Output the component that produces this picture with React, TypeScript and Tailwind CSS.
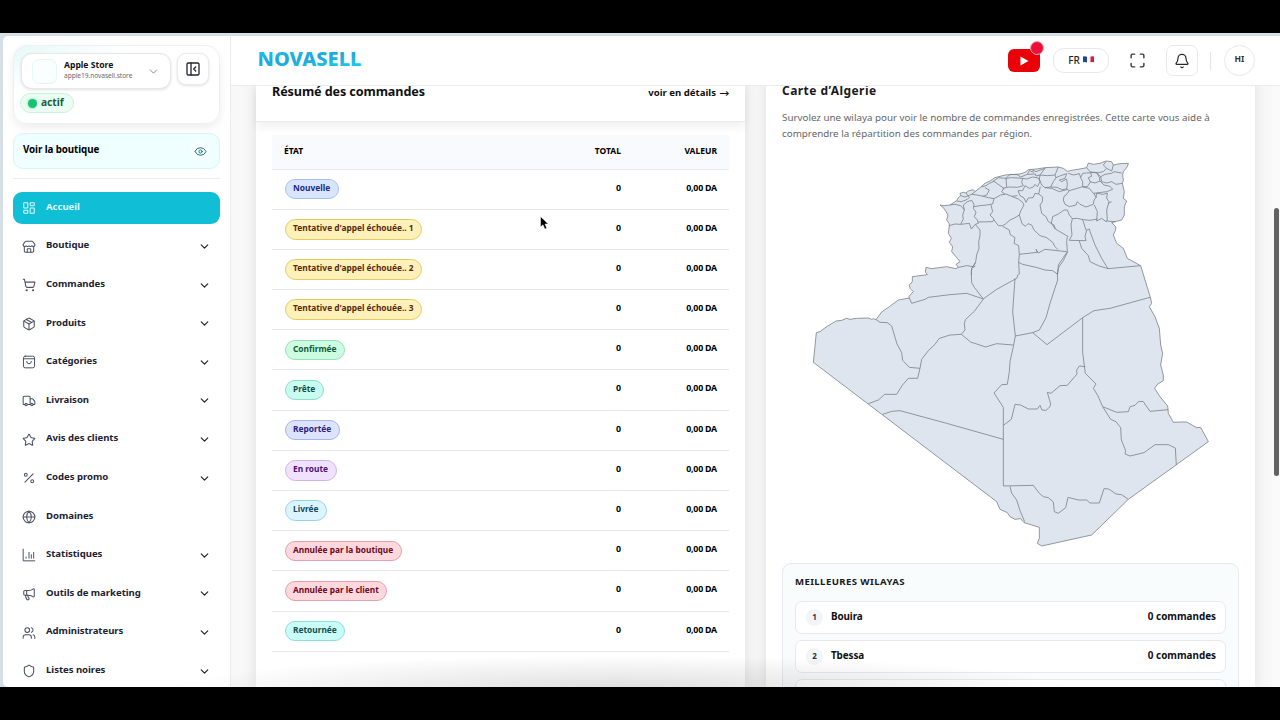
import {
  Bell,
  ChevronDown,
  Eye,
  Globe,
  LayoutDashboard,
  Maximize,
  Megaphone,
  Package,
  PanelLeftClose,
  Percent,
  Shield,
  ShoppingCart,
  Star,
  Store,
  Truck,
  Users,
} from 'lucide-react';

const navItems = [
  { label: 'Accueil', icon: LayoutDashboard, active: true },
  { label: 'Boutique', icon: Store, menu: true },
  { label: 'Commandes', icon: ShoppingCart, menu: true },
  { label: 'Produits', icon: Package, menu: true },
  { label: 'Catégories', icon: CategoryIcon, menu: true },
  { label: 'Livraison', icon: Truck, menu: true },
  { label: 'Avis des clients', icon: Star, menu: true },
  { label: 'Codes promo', icon: Percent, menu: true },
  { label: 'Domaines', icon: Globe },
  { label: 'Statistiques', icon: StatsIcon, menu: true },
  { label: 'Outils de marketing', icon: Megaphone, menu: true },
  { label: 'Administrateurs', icon: Users, menu: true },
  { label: 'Listes noires', icon: Shield, menu: true },
];

const orders = [
  { label: 'Nouvelle', style: 'bg-[#d8e5fd] border-[#a9c1ee] text-[#1b2a86]' },
  { label: "Tentative d'appel échouée.. 1", style: 'bg-[#fdf0b8] border-[#e2cc62] text-[#5c2a0c]' },
  { label: "Tentative d'appel échouée.. 2", style: 'bg-[#fdf0b8] border-[#e2cc62] text-[#5c2a0c]' },
  { label: "Tentative d'appel échouée.. 3", style: 'bg-[#fdf0b8] border-[#e2cc62] text-[#5c2a0c]' },
  { label: 'Confirmée', style: 'bg-[#cdfde0] border-[#98dfb8] text-[#13593d]' },
  { label: 'Prête', style: 'bg-[#c8fcf1] border-[#8fdccf] text-[#144f4c]' },
  { label: 'Reportée', style: 'bg-[#dce3fe] border-[#a9b4ea] text-[#2b2381]' },
  { label: 'En route', style: 'bg-[#f0e2ff] border-[#cfb3e8] text-[#4b1278]' },
  { label: 'Livrée', style: 'bg-[#dbf4fe] border-[#96d4e4] text-[#154860]' },
  { label: 'Annulée par la boutique', style: 'bg-[#fed8dd] border-[#e3a1ab] text-[#6d0a24]' },
  { label: 'Annulée par le client', style: 'bg-[#fed8dd] border-[#e3a1ab] text-[#6d0a24]' },
  { label: 'Retournée', style: 'bg-[#c9fdf8] border-[#8fdedb] text-[#15504f]' },
];

const wilayas = ['Bouira', 'Tbessa'];

function CategoryIcon({ className }: { className?: string; strokeWidth?: number }) {
  return (
    <svg className={className} viewBox="0 0 24 24" fill="none" stroke="currentColor" strokeWidth={1.7} strokeLinecap="round" strokeLinejoin="round">
      <rect x="2.5" y="2" width="19" height="20" rx="3" />
      <path d="M2.5 6.5h19M8 11a4 4 0 0 0 8 0" />
    </svg>
  );
}

function StatsIcon({ className }: { className?: string; strokeWidth?: number }) {
  return (
    <svg className={className} viewBox="0 0 24 24" fill="none" stroke="currentColor" strokeWidth={1.7} strokeLinecap="round">
      <path d="M2 2v20h20M7 17.500v-2M12 17.500v-10M16 17.500v-6M20 17.500v-10" />
    </svg>
  );
}

const Sidebar = () => (
  <aside className="h-full w-[228px] shrink-0 overflow-hidden rounded-l-[5px] border-r border-[#ececee] bg-white pr-[10px] pl-[10px] pt-[9px]">
    <div className="h-[79px] rounded-[14px] border border-[#eef0f1] bg-linear-to-br from-[#e6f8f8] via-white via-30% to-white px-[7px] pt-[7px] shadow-[0_4px_8px_rgba(0,0,0,0.07)]">
      <div className="flex gap-[6px]">
        <div className="flex h-[36px] w-[150px] items-center rounded-[11px] border border-[#e6e8ea] bg-white shadow-[0_1px_3px_rgba(0,0,0,0.12)]">
          <div className="ml-[10px] h-[25px] w-[25px] rounded-[7px] border border-[#e6f7f8] bg-[#f9fefe]" />
          <div className="-mt-[1px] ml-[7px] w-[76px] whitespace-nowrap">
            <div className="text-[8.6px] leading-[11px] font-bold text-[#111]">Apple Store</div>
            <div className="text-[6.6px] leading-[10px] tracking-[-0.05px] text-[#667]">apple19.novasell.store</div>
          </div>
          <ChevronDown className="ml-[7px] h-[13px] w-[13px] text-[#888]" strokeWidth={1.8} />
        </div>
        <div className="flex h-[32px] w-[32px] items-center justify-center rounded-[9px] border border-[#e9ebed] bg-white pr-px shadow-[0_1px_3px_rgba(0,0,0,0.12)]">
          <PanelLeftClose className="h-[16px] w-[16px] text-[#23262d]" strokeWidth={2} />
        </div>
      </div>
      <div className="mt-[4px] -ml-px flex h-[20px] w-[54px] items-center rounded-full border border-[#c9f3db] bg-[#ebfdf2] pl-[7px]">
        <span className="h-[9px] w-[9px] shrink-0 rounded-full bg-[#19c274] shadow-[0_0_3px_#5fdca4]" />
        <span className="-mt-[3px] ml-[4px] text-[10.2px] leading-[14px] font-bold text-[#14603f]">actif</span>
      </div>
    </div>

    <div className="mt-[9px] flex h-[36px] items-center justify-between rounded-[10px] border border-[#d5f5f7] bg-[#effefe] pr-[9px] pl-[9px]">
      <span className="-mt-[2px] text-[9.8px] font-bold tracking-[-0.1px] text-black">Voir la boutique</span>
      <span className="flex h-[20px] w-[20px] items-center justify-center rounded-full bg-[#f7feff]">
        <Eye className="h-[13px] w-[13px] text-[#1d6f7c]" strokeWidth={1.8} />
      </span>
    </div>
    <div className="mt-[9px] h-px bg-[#ececee]" />

    <nav className="mt-[13px] flex flex-col gap-[6.6px]">
      {navItems.map(({ label, icon: Icon, active, menu }) => (
        <div
          key={label}
          className={`flex h-[32px] shrink-0 items-center rounded-[9px] pr-[9px] pl-[9px] ${
            active ? 'bg-[#10bfd6] text-[#d9fbff]' : 'text-[#4c5262]'
          }`}
        >
          <Icon className="h-[14px] w-[14px]" strokeWidth={1.8} />
          <span
            className={`-mt-[2px] ml-[10px] flex-1 text-[9.6px] font-bold tracking-[-0.05px] whitespace-nowrap ${
              active ? 'text-[#d9fbff]' : 'text-[#1d2232]'
            }`}
          >
            {label}
          </span>
          {menu && <ChevronDown className="h-[13px] w-[13px] text-[#222]" strokeWidth={2.2} />}
        </div>
      ))}
    </nav>
  </aside>
);

const Header = () => (
  <header className="relative z-10 flex h-[50px] shrink-0 items-center border-b border-[#ececee] bg-white pr-[25px] pl-[27px]">
    <svg className="-mt-[4px] h-[30px] w-[106px]" viewBox="0 0 106 30">
      <defs>
        <linearGradient id="brand" x1="0" y1="0" x2="0.4" y2="1" spreadMethod="reflect">
          <stop offset="0" stopColor="#16d3f3" />
          <stop offset="0.6" stopColor="#1fa6dc" />
          <stop offset="1" stopColor="#18cbee" />
        </linearGradient>
      </defs>
      <text x="-0.500" y="21.500" fontSize="20" fontWeight="800" textLength="104" lengthAdjust="spacingAndGlyphs" fill="url(#brand)">
        NOVASELL
      </text>
    </svg>
    <div className="ml-auto flex items-center">
      <div className="relative flex h-[23px] w-[32px] items-center justify-center rounded-[6px] bg-[#ea0008]">
        <svg className="h-[10px] w-[9px]" viewBox="0 0 9 10">
          <path d="M0.500 0.500 L8.500 5 L0.500 9.500Z" fill="#fff" />
        </svg>
        <span className="absolute -top-[8px] -right-[4px] h-[14px] w-[14px] rounded-full border border-[#f3a6b5] bg-[#ea1038]" />
      </div>
      <div className="ml-[13px] flex h-[25px] w-[56px] items-center justify-center gap-[3px] rounded-[11px] border border-[#e9e9eb]">
        <span className="-mt-[2px] text-[10px] leading-[12px] font-medium text-[#222]">FR</span>
        <svg className="-mt-[2px] h-[7px] w-[11px]" viewBox="0 0 11 7">
          <path d="M0 0.500 Q2 0 4 0.800 V6.500 Q2 5.700 0 6.300Z" fill="#1c4a86" />
          <path d="M4 0.800 L7.500 0.500 V6.200 L4 6.500Z" fill="#f1f3f6" />
          <path d="M7.500 0.500 Q9.500 0 11 0.500 V6.300 Q9.500 5.800 7.500 6.200Z" fill="#d81f3a" />
        </svg>
      </div>
      <Maximize className="ml-[20px] h-[17px] w-[17px] text-[#3a3a3e]" strokeWidth={2} />
      <div className="ml-[20px] flex h-[31px] w-[32px] items-center justify-center rounded-[7px] border border-[#e9e9eb]">
        <Bell className="h-[16px] w-[16px] text-[#2a2a2e]" strokeWidth={1.8} />
      </div>
      <div className="ml-[12px] h-[18px] w-px bg-[#e5e5e7]" />
      <div className="ml-[13px] flex h-[31px] w-[31px] items-center justify-center rounded-full border border-[#e9e9eb] pb-[3px] text-[8.5px] font-bold text-[#333]">
        HI
      </div>
    </div>
  </header>
);

const OrdersCard = () => (
  <section className="h-full w-[489px] shrink-0 bg-white pt-[10px] shadow-[0_0_14px_rgba(0,0,0,0.1)]">
    <div className="flex h-[35.500px] justify-between border-b border-[#e9eaec] px-[16px] shadow-[0_5px_9px_rgba(0,0,0,0.06)]">
      <h2 className="text-[12.6px] leading-[11px] font-bold tracking-[-0.1px] whitespace-nowrap text-[#111]">Résumé des commandes</h2>
      <a className="flex h-[13px] items-center gap-[3px] text-[9.6px] leading-[12px] font-bold whitespace-nowrap text-[#111]">
        voir en détails
        <span className="w-[10px] font-['DejaVu_Sans'] text-[12px] leading-[10px] font-normal">→</span>
      </a>
    </div>
    <div className="mx-[16px] mt-[13px]">
      <div className="flex h-[35px] items-center border-b border-[#e9eaec] bg-[#f8fafd] px-[12px] text-[8.5px] font-bold text-black">
        <span className="flex-1">ÉTAT</span>
        <span className="w-[96px] text-right">TOTAL</span>
        <span className="w-[96px] text-right">VALEUR</span>
      </div>
      {orders.map((order) => (
        <div key={order.label} className="flex h-[40.2px] items-center border-b border-[#e6e8eb] px-[12px] text-[8.8px] font-bold text-black">
          <div className="flex flex-1 pl-[0.5px]">
            <span className={`flex h-[20.500px] items-center rounded-full border px-[7.5px] pb-[2px] text-[8.35px] whitespace-nowrap ${order.style}`}>
              {order.label}
            </span>
          </div>
          <span className="w-[96px] pb-[2px] text-right">0</span>
          <span className="w-[96px] pb-[2px] text-right tracking-[-0.2px]">0,00 DA</span>
        </div>
      ))}
    </div>
  </section>
);

// Country shape, then the wilaya borders of the three regions
const AlgeriaMap = () => (
  <svg className="h-[400px] w-[420px]" viewBox="0 0 1260 1200" fill="none" stroke="#7b8088" strokeWidth={2.4} strokeLinejoin="round">
    <path
      fill="#dfe5ee"
      d="M40 622L49 533L60 530L80 515L108 498L125 496L140 490L150 493L170 490L205 489L215 493L220 491L228 494L245 471L268 455L295 435L328 429L327 424L340 410L330 400L328 390L337 380L337 365L382 359L376 351L378 337L395 341L440 335L468 341L475 337L468 328L480 320L472 310L455 290L458 275L448 262L454 250L445 235L448 212L447 205L440 195L444 180L432 160L420 150L432 152L450 150L470 137L475 128L482 122L480 115L490 112L498 114L505 108L520 104L525 110L540 98L555 85L570 78L585 68L615 60L660 57L675 52L685 44L710 42L735 38L775 36L790 40L802 49L820 45L840 42L860 38L865 24L880 28L900 25L918 18L935 20L940 30L960 26L985 25L982 35L970 50L968 60L970 75L967 85L973 110L970 130L980 138L973 155L973 180L965 195L945 200L935 203L947 215L947 225L940 240L950 265L970 280L982 310L1022 332L1051 427L1055 445L1048 455L1065 485L1078 520L1082 570L1088 595L1082 630L1090 660L1090 677L1072 688L1064 700L1080 725L1103 753L1105 775L1120 802L1140 801L1160 801L1190 818L1202 817L1225 860L1128 930L985 1033L875 1140L725 1173L712 1165L718 1150L718 1117L695 1110L672 1103L662 1091L645 1093L630 1085L622 1073L600 1063L590 1040Z"
    />
    {/* North */}
    <g transform="translate(390 0)">
      <path d="M57 212L75 207L92 208L100 192L98 180L103 165L92 152L75 148L60 150M80 138L95 140L112 133L118 127L108 114M92 122L105 126L118 121L125 118L135 110M92 208L118 205L124 222L136 208L150 225L150 242L146 260L147 280L140 300L137 320L130 335L110 332L85 337M103 165L100 150L112 140L125 136L132 148L130 160L138 172L133 185L142 195L145 205L136 208" />
      <path d="M125 118L142 120L160 124L175 128L192 131L188 147L170 150L150 152L132 155M192 131L212 120L228 117L245 124L262 122M155 96L168 92L180 84L192 79L210 92L222 100L215 110L225 118M165 98L178 105L170 120L158 124M188 80L205 68L228 70L230 97L218 101M228 70L245 68L278 70L275 82L280 92L262 97L240 96L230 97M183 150L188 170L180 180L192 192L188 200L145 201M192 195L205 212L218 212L225 208L240 195L255 188L268 180L272 168L282 150L278 142L265 132L245 124" />
      <path d="M278 70L290 72L308 66L325 69L330 80L322 95L315 88L310 96L298 100L285 92L278 107L264 107L270 122L282 129L288 142L295 129L309 128L315 115L326 117L331 95M326 117L338 126L337 140L330 150L335 175L348 185L355 200L372 210L376 222L415 245M228 70L240 58L262 59L272 66L292 58L316 57L318 63L330 60L345 40L318 50L305 44M292 58L298 47L312 52M330 60L352 62L375 60L385 36M330 60L328 72L335 90L345 98L362 96L370 80L378 68L375 60M378 68L392 62L410 56L405 70L388 75L395 80L410 72L412 88L410 102L395 104L382 97L362 96" />
      <path d="M415 55L430 60L448 56L452 68L458 80L458 95L442 100L418 107L410 102M345 98L365 100L388 110L410 104M452 68L458 55L470 54L482 53L500 52L508 67L510 78L495 84L480 80L475 68L485 64L482 53M458 95L472 95L482 80M470 38L480 50L500 54L520 50L530 40L520 30L528 20M530 40L545 48L550 30M500 54L512 65L525 58L545 55L552 50L575 54M512 65L515 80L530 84L545 80L558 88L578 85M510 78L522 90L540 94L548 103L530 110L490 115L478 100L458 96" />
      <path d="M418 107L408 120L402 124L400 135L405 148L418 155L438 150L442 140L450 148L468 156L490 148L492 135L498 128L492 115M498 128L500 115L520 118L532 114L530 130L537 140L530 165L532 195L528 200L515 190L500 198L502 170L493 150M502 192L480 196L460 194L442 190L427 191L418 180L412 165L402 165L385 177L368 185L364 205L376 222M545 140L535 145M528 198L556 200M427 191L423 210L426 240L418 256L468 257L465 245L470 225L478 222L482 235L495 270L515 310L534 341M468 225L458 194M412 245L410 260L412 290L385 330L383 358M448 258L455 280L475 302L480 320L505 332L534 341L632 332" />
      <path d="M218 214L238 225L240 238L255 248L252 265L266 272L268 298L322 292L318 283L325 294L345 283L410 290M268 180L276 206L286 214L294 206L305 210L312 225L330 242L350 248L368 262L375 275L384 284M268 298L266 322L278 328L322 338L345 345L368 347L383 358M266 322L268 358M137 322L125 340L124 360" />
    </g>
    {/* West */}
    <g transform="translate(0 285)">
      <path d="M526 48L515 55L514 70L515 98L523 112L550 147L500 130L450 134L385 142L375 148L335 160L328 144M551 146L590 118L650 85L655 72M551 146L523 184L497 208L493 220L495 240L484 253L512 276L557 291L590 281L640 285M484 253L450 255L418 265L405 283L385 302L365 328L360 355L328 352L308 331L305 308L291 282L275 228L262 218L240 217L228 209M360 355L353 385L325 385L306 407L290 433L254 433L235 450L205 461M248 493L275 484L300 482L440 520L610 568" />
    </g>
    {/* East and south */}
    <g transform="translate(600 285)">
      <path d="M45 85L38 185L46 258L40 290L35 312L30 335L28 365L22 403L5 404L-18 429L10 472L10 708L100 706M46 258L98 248L141 284L248 203L282 182L330 175L450 142M98 248L118 240L138 203L150 160L173 90L172 72L176 52L190 32L203 5M248 203L248 308L256 370L288 402L280 415L294 438L308 470L332 508L348 515L362 533L364 570L377 602L375 612L390 618L432 608L465 584L505 584L526 594L529 645M308 470L350 487L385 485L390 470L405 466L415 455L429 454L450 484L505 479M256 350L238 348L230 360L231 372L202 406L180 407L153 430L142 427L152 462L150 470L138 481L126 480L120 466L112 477L85 477L62 465L45 463L34 508L10 526M100 706L118 730L130 740L145 743L160 756L163 785L175 790L197 773L204 742L235 750L260 750L270 759L298 759L312 716L326 717L348 732L365 734L385 748M30 709L35 730L50 750L60 782L74 815" />
    </g>
  </svg>
);

const MapCard = () => (
  <section className="h-full w-[489px] shrink-0 bg-white px-[16px] pt-[10px] shadow-[0_0_14px_rgba(0,0,0,0.1)]">
    <h2 className="text-[12px] leading-[10px] font-bold tracking-[0.45px] whitespace-nowrap text-[#1a1a1e]">Carte d’Algerie</h2>
    <p className="mt-[14px] h-[45px] text-[9.8px] leading-[16px] whitespace-nowrap text-[#666]">
      Survolez une wilaya pour voir le nombre de commandes enregistrées. Cette carte vous aide à
      <br />
      comprendre la répartition des commandes par région.
    </p>
    <div className="ml-[18px] h-[408px]">
      <AlgeriaMap />
    </div>
    <div className="rounded-t-[9px] border border-[#e6eaee] bg-[#f9fcfd] px-[12px] pt-[9px]">
      <h3 className="text-[9.6px] leading-[18px] font-bold tracking-[0.4px] text-[#1a1a1e]">MEILLEURES WILAYAS</h3>
      <div className="mt-[10px] flex flex-col gap-[6px]">
        {wilayas.map((name, i) => (
          <div key={name} className="flex h-[33px] items-center rounded-[7px] border border-[#e6eaee] bg-white pr-[9px] pl-[10px] text-[9.9px] font-bold text-[#111]">
            <span className="flex h-[17px] w-[17px] items-center justify-center rounded-full bg-[#f3f4f7] pb-px text-[8px] text-[#333]">{i + 1}</span>
            <span className="ml-[8px] pb-[2px] tracking-[-0.1px]">{name}</span>
            <span className="ml-auto pb-[2px] whitespace-nowrap">0 commandes</span>
          </div>
        ))}
        <div className="h-[33px] rounded-[7px] border border-[#e6eaee] bg-white" />
      </div>
    </div>
  </section>
);

export default function App() {
  return (
    <div className="flex h-[720px] w-[1280px] flex-col overflow-hidden bg-black py-[33px] font-['Noto_Sans',sans-serif]">
      <div className="relative flex h-[654px] overflow-hidden bg-[#d5dfe7] pt-[3px] pl-[3px]">
        <Sidebar />
        <div className="flex min-w-0 flex-1 flex-col bg-[#f8f8f8]">
          <Header />
          <main className="-mt-[10px] flex min-h-0 flex-1 overflow-hidden">
            <div className="flex min-w-0 flex-1 gap-[21px] overflow-hidden pl-[25px]">
              <OrdersCard />
              <MapCard />
            </div>
            <div className="w-[8px] shrink-0 bg-[#fafafa] pt-[132px] pl-[2px]">
              <div className="h-[268px] w-[5px] rounded-full bg-[#636363]" />
            </div>
          </main>
        </div>
        <div className="pointer-events-none absolute bottom-0 left-[170px] h-[32px] w-[900px] bg-[radial-gradient(ellipse_at_bottom,rgba(0,0,0,0.12),transparent_70%)]" />
        <svg className="absolute top-[183px] left-[540px] h-[14px] w-[9px]" viewBox="0 0 9 14">
          <path d="M0.500 0.500V11L3 8.800L4.800 13L6.800 12.200L5 8H8.300Z" fill="#000" stroke="#fff" strokeWidth="0.500" />
        </svg>
      </div>
    </div>
  );
}
